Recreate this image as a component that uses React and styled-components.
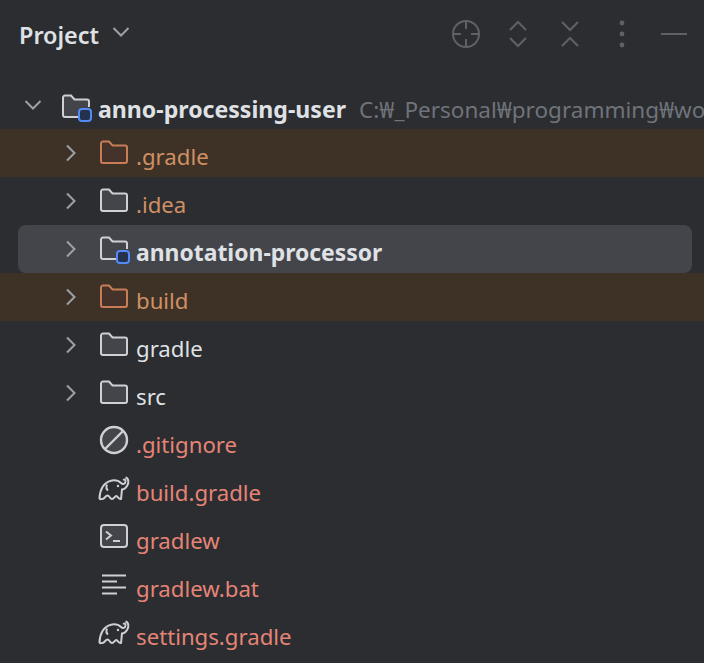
import styled, { createGlobalStyle } from "styled-components";

const GlobalStyle = createGlobalStyle`
  html, body {
    margin: 0;
    height: 100%;
    background: #2b2d30;
    overflow: hidden;
  }
`

const Panel = styled.div`
  width: 704px;
  height: 663px;
  overflow: hidden;
  background: #2b2d30;
  font-family: "Noto Sans", "Open Sans", sans-serif;
  font-size: 22.2px;
  color: #dfe1e5;
`

const Header = styled.div`
  display: flex;
  align-items: center;
  height: 68px;
  padding: 0 15px 0 19px;
  margin-bottom: 17px;
`

const Title = styled.span`
  font-weight: 600;
  font-size: 23.4px;
  margin: 2px 13px 0 0;
`

const Toolbar = styled.div`
  display: flex;
  align-items: center;
  margin-left: auto;
  gap: 22px;
  color: #5e6166;

  svg {
    display: block;
  }
`

const Row = styled.div`
  display: flex;
  align-items: center;
  height: ${p => (p.$root ? "44px" : "48px")};
  padding-left: ${p => (p.$root ? "24px" : "62px")};
  background: ${p => (p.$excluded ? "#3e3226" : "transparent")};
  white-space: nowrap;
  overflow: hidden;
`

const SelectedRow = styled(Row)`
  background: #43454a;
  border-radius: 8px;
  margin: 0 12px 0 18px;
  padding-left: 44px;
`

const Arrow = styled.span`
  display: flex;
  justify-content: center;
  width: 18px;
  margin-right: 20px;
  margin-bottom: ${p => (p.$root ? "4px" : "0")};
  color: #9da0a8;
`

const Spacer = styled.span`
  width: 38px;
  flex-shrink: 0;
`

const Icon = styled.span`
  display: flex;
  width: 32px;
  height: 32px;
  flex-shrink: 0;
  margin: 0 6px 2px -2px;
`

const Label = styled.span`
  color: ${p => p.$color || "#dfe1e5"};
  font-weight: ${p => (p.$bold ? 700 : 400)};
  font-size: ${p => (p.$root ? "23.1px" : p.$bold ? "22.9px" : "22.2px")};
  margin-top: ${p => (p.$root ? "4px" : "7px")};
`

const PathText = styled.span`
  color: #6f737a;
  font-size: 22.5px;
  margin: 4px 0 0 13px;
`

const Chevron = ({ down }) => (
  <svg width="18" height="18" viewBox="0 0 18 18" fill="none" stroke="currentColor" strokeWidth="2">
    <path d={down ? "M1.5 5L9 12.5L16.5 5" : "M5 1.5L12.5 9L5 16.5"} />
  </svg>
)

const FOLDER = "M3 7.5A2 2 0 0 1 5 5.5H11L14.5 9.5H27A2 2 0 0 1 29 11.5V25A2 2 0 0 1 27 27H5A2 2 0 0 1 3 25Z"

const FolderIcon = ({ stroke = "#ced0d6", fill = "#43454a", badge }) => (
  <svg width="32" height="32" viewBox="0 0 32 32" fill="none">
    {badge ? (
      <>
        <path d={FOLDER} fill={fill} />
        <path
          d="M18 27H5A2 2 0 0 1 3 25V7.5A2 2 0 0 1 5 5.5H11L14.5 9.5H27A2 2 0 0 1 29 11.5V17"
          stroke={stroke}
          strokeWidth="2"
        />
        <rect x="19" y="19" width="12" height="12" rx="3" fill="#25324d" stroke="#548af7" strokeWidth="2" />
      </>
    ) : (
      <path d={FOLDER} fill={fill} stroke={stroke} strokeWidth="2" />
    )}
  </svg>
)

const IgnoreIcon = () => (
  <svg width="32" height="32" viewBox="0 0 32 32" fill="none" stroke="#ced0d6" strokeWidth="2.4">
    <circle cx="16" cy="16" r="13" fill="#43454a" />
    <path d="M7 25L25 7" />
  </svg>
)

const GradleIcon = () => (
  <svg width="32" height="32" viewBox="0 0 32 32" fill="none" stroke="#ced0d6" strokeWidth="2">
    <g transform="translate(0 -1)">
      <path d="M1.5 28C1.5 20 5 11 14 9.5C18 9 21 10 23 12C25 14 27 13 27.5 10.5C27.8 8.5 26 8 25.5 9.5" />
      <path d="M27.5 6.5C31 7.5 31 12 29 15C27.5 17.5 25.5 18.5 24 18.5C23.5 22 23.5 25 23 28C21 28.5 20 26 18.5 25C17 24.5 16 28 14 28C12 28 11.5 24.5 9.5 24.5C7.5 24.5 6.5 28 4.5 28C3 28 2 28.5 1.5 28" />
      <path d="M9 13.5C8 16 8 18 10 19.5" />
      <circle cx="20" cy="15" r="1.2" fill="#ced0d6" stroke="none" />
    </g>
  </svg>
)

const TerminalIcon = () => (
  <svg width="32" height="32" viewBox="0 0 32 32" fill="none" stroke="#ced0d6" strokeWidth="2">
    <rect x="3" y="5" width="26" height="22" rx="3" fill="#43454a" />
    <path d="M8 11.5L13 15.5L8 19.5M15 21H22" />
  </svg>
)

const TextIcon = () => (
  <svg width="32" height="32" viewBox="0 0 32 32" fill="none" stroke="#ced0d6" strokeWidth="2">
    <path d="M4 7.5H28M4 13.5H19M4 19.5H28M4 25.5H19" />
  </svg>
)

const orange = "#cf9064"
const red = "#e58476"

const files = [
  { name: ".gradle", color: orange, excluded: true, folder: true },
  { name: ".idea", color: orange, folder: true },
  { name: "annotation-processor", selected: true, folder: true },
  { name: "build", color: orange, excluded: true, folder: true },
  { name: "gradle", folder: true },
  { name: "src", folder: true },
  { name: ".gitignore", color: red, icon: <IgnoreIcon /> },
  { name: "build.gradle", color: red, icon: <GradleIcon /> },
  { name: "gradlew", color: red, icon: <TerminalIcon /> },
  { name: "gradlew.bat", color: red, icon: <TextIcon /> },
  { name: "settings.gradle", color: red, icon: <GradleIcon /> },
]

function FileRow({ file }) {
  const Wrapper = file.selected ? SelectedRow : Row
  let icon = file.icon
  if (file.folder) {
    icon = file.excluded
      ? <FolderIcon stroke="#c77d55" fill="#45322b" />
      : <FolderIcon badge={file.selected} />
  }
  return (
    <Wrapper $excluded={file.excluded}>
      {file.folder ? <Arrow><Chevron /></Arrow> : <Spacer />}
      <Icon>{icon}</Icon>
      <Label $color={file.color} $bold={file.selected}>{file.name}</Label>
    </Wrapper>
  )
}

export default function App() {
  return (
    <Panel>
      <GlobalStyle />
      <Header>
        <Title>Project</Title>
        <Arrow $root><Chevron down /></Arrow>
        <Toolbar>
          <svg width="30" height="30" viewBox="0 0 30 30" fill="none" stroke="currentColor" strokeWidth="2">
            <circle cx="15" cy="15" r="13" />
            <path d="M15 2V10M15 20V28M2 15H10M20 15H28" />
          </svg>
          <svg width="30" height="30" viewBox="0 0 30 30" fill="none" stroke="currentColor" strokeWidth="2">
            <path d="M7 11L15 3L23 11M7 19L15 27L23 19" />
          </svg>
          <svg width="30" height="30" viewBox="0 0 30 30" fill="none" stroke="currentColor" strokeWidth="2">
            <path d="M7 3L15 11L23 3M7 27L15 19L23 27" />
          </svg>
          <svg width="30" height="30" viewBox="0 0 30 30" fill="currentColor">
            <circle cx="15" cy="4" r="2.4" />
            <circle cx="15" cy="15" r="2.4" />
            <circle cx="15" cy="26" r="2.4" />
          </svg>
          <svg width="30" height="30" viewBox="0 0 30 30" fill="none" stroke="currentColor" strokeWidth="2">
            <path d="M2 15H28" />
          </svg>
        </Toolbar>
      </Header>
      <Row $root>
        <Arrow $root><Chevron down /></Arrow>
        <Icon><FolderIcon badge /></Icon>
        <Label $bold $root>anno-processing-user</Label>
        <PathText>C:₩_Personal₩programming₩workspace</PathText>
      </Row>
      {files.map(file => <FileRow key={file.name} file={file} />)}
    </Panel>
  )
}
